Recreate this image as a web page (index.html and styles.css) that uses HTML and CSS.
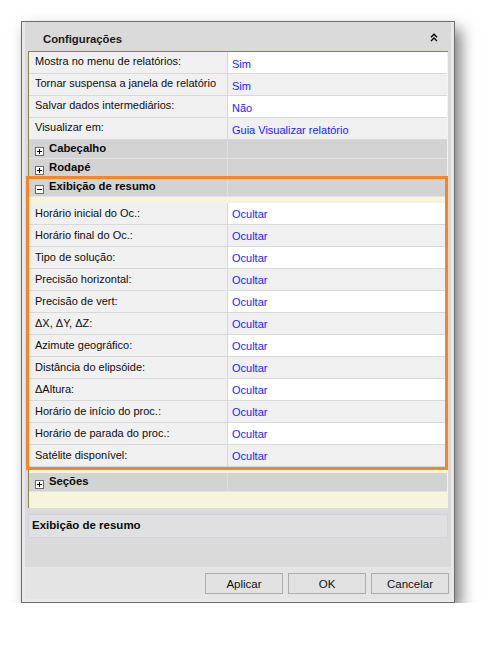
FILE: index.html
```html
<!DOCTYPE html>
<html lang="pt">
<head>
<meta charset="utf-8">
<title>Configurações</title>
<link rel="stylesheet" href="styles.css">
</head>
<body>
<div class="window">
  <div class="content">
    <div class="header">
      <span class="title">Configurações</span>
      <svg class="chevron" width="8" height="9" viewBox="0 0 8 9"><path d="M1 4.2 L4 1.2 L7 4.2 M1 8 L4 5 L7 8" fill="none" stroke="#000" stroke-width="1.4"/></svg>
    </div>
    <div class="grid">
      <div class="row top"><div class="label">Mostra no menu de relatórios:</div><div class="value">Sim</div></div>
      <div class="row top alt"><div class="label">Tornar suspensa a janela de relatório</div><div class="value">Sim</div></div>
      <div class="row top"><div class="label">Salvar dados intermediários:</div><div class="value">Não</div></div>
      <div class="row top alt"><div class="label">Visualizar em:</div><div class="value">Guia Visualizar relatório</div></div>
      <div class="cat"><div class="cat-name"><svg class="box" width="9" height="9" viewBox="0 0 9 9"><rect x="0.5" y="0.5" width="8" height="8" fill="#fff" stroke="#6a6a6a"/><path d="M2 4.5 H7 M4.5 2 V7" stroke="#000"/></svg>Cabeçalho</div><div class="cat-rest"></div></div>
      <div class="cat"><div class="cat-name"><svg class="box" width="9" height="9" viewBox="0 0 9 9"><rect x="0.5" y="0.5" width="8" height="8" fill="#fff" stroke="#6a6a6a"/><path d="M2 4.5 H7 M4.5 2 V7" stroke="#000"/></svg>Rodapé</div><div class="cat-rest"></div></div>
      <div class="cat"><div class="cat-name"><svg class="box" width="9" height="9" viewBox="0 0 9 9"><rect x="0.5" y="0.5" width="8" height="8" fill="#fff" stroke="#6a6a6a"/><path d="M2 4.5 H7" stroke="#000"/></svg>Exibição de resumo</div><div class="cat-rest"></div></div>
      <div class="gap"></div>
      <div class="row"><div class="label">Horário inicial do Oc.:</div><div class="value">Ocultar</div></div>
      <div class="row alt"><div class="label">Horário final do Oc.:</div><div class="value">Ocultar</div></div>
      <div class="row"><div class="label">Tipo de solução:</div><div class="value">Ocultar</div></div>
      <div class="row alt"><div class="label">Precisão horizontal:</div><div class="value">Ocultar</div></div>
      <div class="row"><div class="label">Precisão de vert:</div><div class="value">Ocultar</div></div>
      <div class="row alt"><div class="label">ΔX, ΔY, ΔZ:</div><div class="value">Ocultar</div></div>
      <div class="row"><div class="label">Azimute geográfico:</div><div class="value">Ocultar</div></div>
      <div class="row alt"><div class="label">Distância do elipsóide:</div><div class="value">Ocultar</div></div>
      <div class="row"><div class="label">ΔAltura:</div><div class="value">Ocultar</div></div>
      <div class="row alt"><div class="label">Horário de início do proc.:</div><div class="value">Ocultar</div></div>
      <div class="row"><div class="label">Horário de parada do proc.:</div><div class="value">Ocultar</div></div>
      <div class="row alt"><div class="label">Satélite disponível:</div><div class="value">Ocultar</div></div>
      <div class="gap"></div>
      <div class="cat"><div class="cat-name"><svg class="box" width="9" height="9" viewBox="0 0 9 9"><rect x="0.5" y="0.5" width="8" height="8" fill="#fff" stroke="#6a6a6a"/><path d="M2 4.5 H7 M4.5 2 V7" stroke="#000"/></svg>Seções</div><div class="cat-rest"></div></div>
    </div>
    <div class="desc">Exibição de resumo</div>
    <div class="spacer"></div>
    <div class="buttons">
      <button class="btn">Aplicar</button>
      <button class="btn">OK</button>
      <button class="btn">Cancelar</button>
    </div>
  </div>
  <div class="highlight"></div>
</div>
</body>
</html>
```
FILE: styles.css
```css
html, body {
  margin: 0;
  padding: 0;
  background: #ffffff;
}
body {
  font-family: "Liberation Sans", Arial, sans-serif;
  font-size: 11px;
  color: #0e0e0e;
}
.window {
  position: relative;
  margin: 21px 0 0 21px;
  width: 434px;
  height: 582px;
  box-sizing: border-box;
  border: 1px solid #6c6c6c;
  padding: 0 3px 3px 3px;
  background: #e8e8e8;
  box-shadow: 6px 8px 14px rgba(0, 0, 0, 0.5);
  display: flex;
  flex-direction: column;
}
.content {
  flex: 1;
  background: #dadada;
  display: flex;
  flex-direction: column;
}
.header {
  height: 29px;
  flex: none;
  display: flex;
  align-items: center;
  justify-content: space-between;
  padding: 0 13px 0 18px;
}
.title {
  font-weight: bold;
  font-size: 11.3px;
  color: #1a1a1a;
  margin-top: 4px;
}
.chevron {
  display: block;
  margin-top: 1px;
}
.grid {
  flex: none;
  height: 457px;
  box-sizing: border-box;
  margin: 0 3px;
  border-top: 1px solid #86864c;
  border-left: 1px solid #86864c;
  background: #f5f5dc;
  display: flex;
  flex-direction: column;
}
.row {
  display: grid;
  grid-template-columns: 199px 1fr;
  height: 22px;
  box-sizing: border-box;
  margin-right: 1px;
  border-bottom: 1px solid #d8d8d8;
  line-height: 13px;
}
.label {
  background: #f0f0f0;
  border-right: 1px solid #d8d8d8;
  padding: 4px 0 0 6px;
  white-space: nowrap;
  overflow: hidden;
}
.value {
  background: #ffffff;
  color: #1c1cff;
  padding: 5px 0 0 4px;
  white-space: nowrap;
}
.row.alt .value {
  background: #f0f0f0;
}
.row.top .label {
  padding-top: 3px;
}
.row.top .value {
  padding-top: 6px;
}
.cat {
  display: grid;
  grid-template-columns: 199px 1fr;
  height: 19px;
  box-sizing: border-box;
  margin-right: 1px;
  border-bottom: 1px solid #e2e2e2;
  background: #d3d3d3;
}
.cat-name {
  display: flex;
  align-items: flex-start;
  padding: 2px 0 0 6px;
  font-weight: bold;
  font-size: 11.3px;
  line-height: 13px;
  color: #0a0a0a;
  border-right: 1px solid #dedede;
}
.box {
  display: block;
  flex: none;
  margin: 5px 5px 0 0;
}
.gap {
  height: 6px;
  flex: none;
}
.desc {
  flex: none;
  margin: 6px 3px 0 3px;
  height: 24px;
  box-sizing: border-box;
  border: 1px solid #cfd5db;
  background: #e0e0e0;
  padding: 3px 0 0 3px;
  font-weight: bold;
  font-size: 11.5px;
  line-height: 14px;
  color: #0a0a0a;
}
.spacer {
  flex: 1;
}
.buttons {
  flex: none;
  height: 32px;
  box-sizing: border-box;
  background: #e4e4e4;
  display: flex;
  justify-content: flex-end;
  gap: 5px;
  padding: 6px 2px 0 0;
}
.btn {
  width: 78px;
  height: 21px;
  box-sizing: border-box;
  border: 1px solid #adadad;
  background: #e1e1e1;
  font-family: "Liberation Sans", Arial, sans-serif;
  font-size: 11.5px;
  color: #111;
  padding: 0;
  margin: 0;
}
.highlight {
  position: absolute;
  left: 4px;
  top: 154px;
  width: 422px;
  height: 294px;
  box-sizing: border-box;
  border: 3px solid #f5842a;
  pointer-events: none;
}
```
